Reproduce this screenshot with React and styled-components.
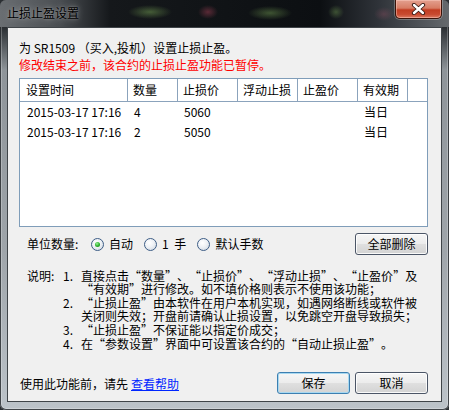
import React from 'react';
import styled, { createGlobalStyle } from 'styled-components';

const Global = createGlobalStyle`
  html, body { margin: 0; padding: 0; background: #2b2f33; }
  body {
    width: 449px; height: 410px; overflow: hidden;
    font-family: "Noto Sans CJK SC", "Liberation Sans", sans-serif;
    font-size: 12px; color: #000;
  }
  * { box-sizing: border-box; }
`;

const Window = styled.div`
  width: 449px;
  height: 410px;
  display: flex;
  flex-direction: column;
  padding: 0 7px 8px 7px;
  border-radius: 6px 6px 6px 6px;
  overflow: hidden;
  background: linear-gradient(180deg, #3a3e42 0px, #2a2e32 27px, #8e9499 70px, #9fa5aa 250px, #bcc3c9 410px);
  box-shadow: inset 0 0 0 1px rgba(30, 34, 38, 0.8), inset 0 0 0 2px rgba(255, 255, 255, 0.25);
`;

const TitleBar = styled.div`
  height: 27px;
  margin: 0 -7px;
  padding: 0 7px;
  display: flex;
  align-items: flex-start;
  background:
    radial-gradient(ellipse 22px 7px at 150px 12px, rgba(110, 150, 80, 0.55), transparent),
    radial-gradient(ellipse 10px 7px at 208px 12px, rgba(150, 60, 80, 0.55), transparent),
    radial-gradient(ellipse 22px 7px at 270px 13px, rgba(110, 150, 80, 0.5), transparent),
    radial-gradient(ellipse 8px 7px at 336px 12px, rgba(110, 150, 80, 0.45), transparent),
    radial-gradient(ellipse 10px 7px at 384px 14px, rgba(150, 80, 100, 0.35), transparent),
    linear-gradient(90deg, #6a6e72 0px, #4a4e52 60px, #15181b 110px, #0c0f12 320px, #30343a 380px, #65696d 449px);
`;

const TitleText = styled.div`
  line-height: 26px;
  font-size: 12px;
  color: #000;
  text-shadow: 0 0 6px rgba(255, 255, 255, 0.45), 0 0 2px rgba(255, 255, 255, 0.3);
`;

const CloseButton = styled.div`
  margin-left: auto;
  width: 47px;
  height: 19px;
  display: flex;
  align-items: center;
  justify-content: center;
  border: 1px solid #3a1208;
  border-top: none;
  border-radius: 0 0 5px 5px;
  background: linear-gradient(180deg, #e3a08f 0%, #d77c64 45%, #c23d22 55%, #c84a30 80%, #dc7a62 100%);
  box-shadow: inset 0 0 0 1px rgba(255, 210, 200, 0.45), 0 0 0 1px rgba(255, 255, 255, 0.25);
`;

const Client = styled.div`
  flex: 1;
  display: flex;
  flex-direction: column;
  background: #f0f0f0;
  border: 1px solid #3f4448;
  padding: 11px 13px 7px 11px;
`;

const InfoLine = styled.div`
  line-height: 17px;
  white-space: nowrap;
  color: ${p => (p.$warn ? '#ff0000' : '#000')};
`;

const Table = styled.div`
  margin-top: 5px;
  height: 149px;
  border: 1px solid #7f9db9;
  background: #fff;
  display: flex;
  flex-direction: column;
`;

const COLS = '108px 50px 60px 60px 60px 50px 1fr';

const HeadRow = styled.div`
  display: grid;
  grid-template-columns: ${COLS};
  height: 23px;
  border-bottom: 1px solid #8ba3bc;
`;

const HeadCell = styled.div`
  padding-left: ${p => (p.$first ? 6 : 5)}px;
  line-height: 22px;
  white-space: nowrap;
  border-right: ${p => (p.$last ? 'none' : '1px solid #8ba3bc')};
`;

const BodyRow = styled.div`
  display: grid;
  grid-template-columns: ${COLS};
  height: 20px;
`;

const Cell = styled.div`
  padding-left: ${p => (p.$first ? 7 : 6)}px;
  line-height: 20px;
  white-space: nowrap;
`;

const UnitRow = styled.div`
  margin-top: 6px;
  height: 22px;
  display: flex;
  align-items: center;
`;

const UnitLabel = styled.span`
  width: 72px;
  padding-left: 8px;
  line-height: 22px;
`;

const Option = styled.label`
  display: flex;
  align-items: center;
  gap: 5px;
  margin-left: ${p => p.$gap || 0}px;
  line-height: 22px;
  word-spacing: 3px;
`;

const Radio = styled.span`
  width: 13px;
  height: 13px;
  border-radius: 50%;
  border: 1px solid #3d5d86;
  background: radial-gradient(circle at 40% 35%, #ffffff 0%, #eef1f5 45%, #c9d2dc 100%);
  display: flex;
  align-items: center;
  justify-content: center;
  &::after {
    content: '';
    width: 5px;
    height: 5px;
    border-radius: 50%;
    display: ${p => (p.$checked ? 'block' : 'none')};
    background: radial-gradient(circle at 40% 35%, #9cf09c 0%, #2fb52f 50%, #157a15 100%);
  }
`;

const Button = styled.div`
  width: 73px;
  height: 22px;
  display: flex;
  align-items: center;
  justify-content: center;
  border: 1px solid ${p => (p.$default ? '#3c7fb1' : '#4b5566')};
  border-radius: 3px;
  background: linear-gradient(180deg, #f6f6f6 0%, #ececec 48%, #dfdfdf 52%, #d3d3d3 100%);
  box-shadow: inset 0 0 0 1px ${p => (p.$default ? '#a8d8f0' : 'rgba(255,255,255,0.85)')};
  line-height: 20px;
`;

const DeleteButton = styled(Button)`
  margin-left: auto;
`;

const Desc = styled.div`
  margin-top: 14px;
  padding-left: 8px;
  display: flex;
  line-height: 13px;
`;

const DescLabel = styled.span`
  width: 36px;
`;

const DescList = styled.div`
  display: flex;
  flex-direction: column;
  gap: 1px;
`;

const DescItem = styled.div`
  display: flex;
`;

const Num = styled.span`
  width: 18px;
`;

const Lines = styled.div`
  display: flex;
  flex-direction: column;
  white-space: nowrap;
`;

const Quote = styled.span`
  display: inline-block;
  width: 12px;
  text-align: ${p => (p.$open ? 'right' : 'left')};
`;

const Footer = styled.div`
  margin-top: auto;
  height: 22px;
  display: flex;
  align-items: center;
  gap: 5px;
`;

const FooterText = styled.span`
  padding-left: 1px;
  margin-right: auto;
  white-space: nowrap;
`;

const HelpLink = styled.a`
  color: #0026ff;
  text-decoration: underline;
  margin-left: 3px;
  cursor: pointer;
`;

const headers = ['设置时间', '数量', '止损价', '浮动止损', '止盈价', '有效期', ''];
const rows = [
  ['2015-03-17 17:16', '4', '5060', '', '', '当日', ''],
  ['2015-03-17 17:16', '2', '5050', '', '', '当日', ''],
];

const notes = [
  ['直接点击“数量”、“止损价”、“浮动止损”、“止盈价”及', '“有效期”进行修改。如不填价格则表示不使用该功能；'],
  ['“止损止盈”由本软件在用户本机实现，如遇网络断线或软件被', '关闭则失效；开盘前请确认止损设置，以免跳空开盘导致损失；'],
  ['“止损止盈”不保证能以指定价成交；'],
  ['在“参数设置”界面中可设置该合约的“自动止损止盈”。'],
];

function renderLine(text) {
  const parts = [];
  let buf = '';
  [...text].forEach((ch, i) => {
    if (ch === '“' || ch === '”') {
      if (buf) parts.push(buf);
      buf = '';
      parts.push(<Quote key={i} $open={ch === '“'}>{ch}</Quote>);
    } else {
      buf += ch;
    }
  });
  if (buf) parts.push(buf);
  return parts;
}

export default function App() {
  return (
    <>
      <Global />
      <Window>
        <TitleBar>
          <TitleText>止损止盈设置</TitleText>
          <CloseButton aria-label="关闭">
            <svg width="15" height="12" viewBox="0 0 15 12">
              <path d="M3 2 L12 10 M12 2 L3 10" stroke="#3a1a14" strokeWidth="4.2" strokeLinecap="round" />
              <path d="M3 2 L12 10 M12 2 L3 10" stroke="#ffffff" strokeWidth="2.4" strokeLinecap="round" />
            </svg>
          </CloseButton>
        </TitleBar>
        <Client>
          <InfoLine>为 SR1509 （买入,投机）设置止损止盈。</InfoLine>
          <InfoLine $warn>修改结束之前，该合约的止损止盈功能已暂停。</InfoLine>
          <Table>
            <HeadRow>
              {headers.map((h, i) => (
                <HeadCell key={i} $first={i === 0} $last={i === headers.length - 1}>{h}</HeadCell>
              ))}
            </HeadRow>
            {rows.map((r, ri) => (
              <BodyRow key={ri}>
                {r.map((c, ci) => (
                  <Cell key={ci} $first={ci === 0}>{c}</Cell>
                ))}
              </BodyRow>
            ))}
          </Table>
          <UnitRow>
            <UnitLabel>单位数量:</UnitLabel>
            <Option><Radio $checked />自动</Option>
            <Option $gap={11}><Radio />1 手</Option>
            <Option $gap={11}><Radio />默认手数</Option>
            <DeleteButton>全部删除</DeleteButton>
          </UnitRow>
          <Desc>
            <DescLabel>说明:</DescLabel>
            <DescList>
              {notes.map((lines, i) => (
                <DescItem key={i}>
                  <Num>{i + 1}.</Num>
                  <Lines>
                    {lines.map((l, j) => <span key={j}>{renderLine(l)}</span>)}
                  </Lines>
                </DescItem>
              ))}
            </DescList>
          </Desc>
          <Footer>
            <FooterText>
              使用此功能前，请先<HelpLink>查看帮助</HelpLink>
            </FooterText>
            <Button $default>保存</Button>
            <Button>取消</Button>
          </Footer>
        </Client>
      </Window>
    </>
  );
}
